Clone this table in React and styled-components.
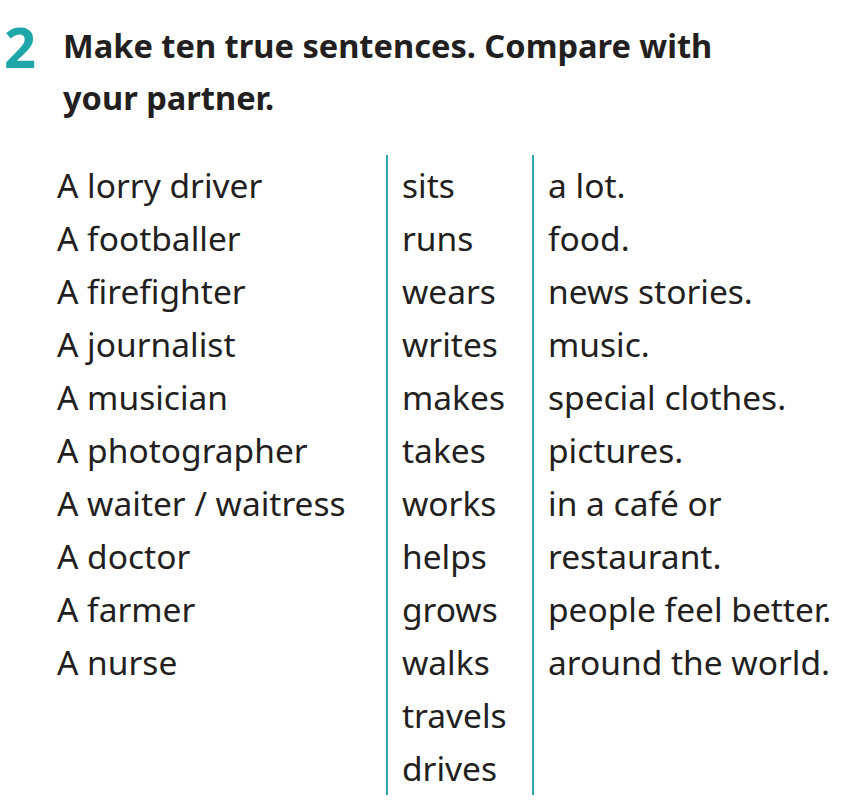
import styled, { createGlobalStyle } from 'styled-components';

const Global = createGlobalStyle`
  body {
    margin: 0;
    background: #fff;
    font-family: "Noto Sans", "Open Sans", sans-serif;
    color: #231f20;
  }
`;

const Page = styled.div`
  width: 853px;
  height: 808px;
  overflow: hidden;
`;

const Header = styled.div`
  display: flex;
  align-items: flex-start;
  padding: 20px 0 0 4px;
`;

const Number = styled.div`
  width: 59px;
  font-size: 56px;
  font-weight: 700;
  line-height: 52px;
  color: #1fa6a9;
`;

const Title = styled.h2`
  margin: 0;
  font-size: 32.6px;
  font-weight: 700;
  line-height: 52px;
`;

const Table = styled.div`
  display: flex;
  margin-top: 31px;
  padding-left: 57px;
`;

const Column = styled.div`
  width: ${(p) => p.width}px;
  padding: 4px 0 0 ${(p) => (p.divided ? 14 : 0)}px;
  border-left: ${(p) => (p.divided ? '2px solid #2aa7ab' : 'none')};
  box-sizing: border-box;
`;

const Cell = styled.div`
  font-size: 33.5px;
  line-height: 53px;
  white-space: nowrap;
`;

const subjects = [
  'A lorry driver',
  'A footballer',
  'A firefighter',
  'A journalist',
  'A musician',
  'A photographer',
  'A waiter / waitress',
  'A doctor',
  'A farmer',
  'A nurse',
];

const verbs = ['sits', 'runs', 'wears', 'writes', 'makes', 'takes', 'works', 'helps', 'grows', 'walks', 'travels', 'drives'];

const endings = [
  'a lot.',
  'food.',
  'news stories.',
  'music.',
  'special clothes.',
  'pictures.',
  'in a café or',
  'restaurant.',
  'people feel better.',
  'around the world.',
];

export default function App() {
  return (
    <Page>
      <Global />
      <Header>
        <Number>2</Number>
        <Title>
          Make ten true sentences. Compare with
          <br />
          your partner.
        </Title>
      </Header>
      <Table>
        <Column width={329}>
          {subjects.map((s) => (
            <Cell key={s}>{s}</Cell>
          ))}
        </Column>
        <Column width={146} divided>
          {verbs.map((v) => (
            <Cell key={v}>{v}</Cell>
          ))}
        </Column>
        <Column width={320} divided>
          {endings.map((e) => (
            <Cell key={e}>{e}</Cell>
          ))}
        </Column>
      </Table>
    </Page>
  );
}
